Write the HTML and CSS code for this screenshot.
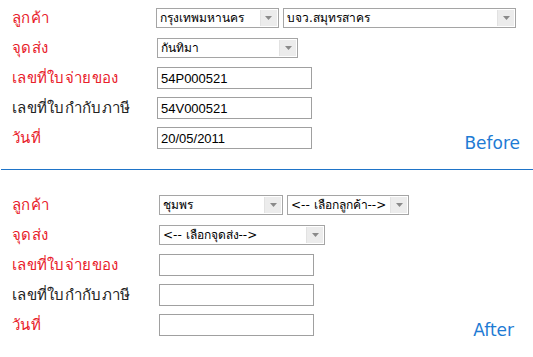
FILE: index.html
```html
<!DOCTYPE html>
<html>
<head>
<meta charset="utf-8" />
<title>ลูกค้า - Before / After</title>
<link rel="stylesheet" href="styles.css">
</head>
<body>
<div class="sheet">
	<div class="form before">
		<div class="row">
			<span class="lbl req">ลูกค้า</span>
			<div class="combo w124"><span class="txt">กรุงเทพมหานคร</span><span class="arr"><svg width="7" height="4" viewBox="0 0 7 4"><path d="M0 0h7L3.5 4z" fill="#8a8a8a"/></svg></span></div>
			<div class="combo w235"><span class="txt">บจว.สมุทรสาคร</span><span class="arr"><svg width="7" height="4" viewBox="0 0 7 4"><path d="M0 0h7L3.5 4z" fill="#8a8a8a"/></svg></span></div>
		</div>
		<div class="row">
			<span class="lbl req">จุดส่ง</span>
			<div class="combo w141"><span class="txt">กันทิมา</span><span class="arr"><svg width="7" height="4" viewBox="0 0 7 4"><path d="M0 0h7L3.5 4z" fill="#8a8a8a"/></svg></span></div>
		</div>
		<div class="row">
			<span class="lbl req">เลขที่ใบจ่ายของ</span>
			<input class="box" type="text" value="54P000521" />
		</div>
		<div class="row">
			<span class="lbl">เลขที่ใบกำกับภาษี</span>
			<input class="box" type="text" value="54V000521" />
		</div>
		<div class="row">
			<span class="lbl req">วันที่</span>
			<input class="box" type="text" value="20/05/2011" />
			<span class="tag">Before</span>
		</div>
	</div>

	<div class="form after">
		<div class="row">
			<span class="lbl req">ลูกค้า</span>
			<div class="combo w124"><span class="txt">ชุมพร</span><span class="arr"><svg width="7" height="4" viewBox="0 0 7 4"><path d="M0 0h7L3.5 4z" fill="#8a8a8a"/></svg></span></div>
			<div class="combo w122"><span class="txt">&lt;-- เลือกลูกค้า--&gt;</span><span class="arr"><svg width="7" height="4" viewBox="0 0 7 4"><path d="M0 0h7L3.5 4z" fill="#8a8a8a"/></svg></span></div>
		</div>
		<div class="row">
			<span class="lbl req">จุดส่ง</span>
			<div class="combo w166"><span class="txt">&lt;-- เลือกจุดส่ง--&gt;</span><span class="arr"><svg width="7" height="4" viewBox="0 0 7 4"><path d="M0 0h7L3.5 4z" fill="#8a8a8a"/></svg></span></div>
		</div>
		<div class="row">
			<span class="lbl req">เลขที่ใบจ่ายของ</span>
			<input class="box" type="text" value="" />
		</div>
		<div class="row">
			<span class="lbl">เลขที่ใบกำกับภาษี</span>
			<input class="box" type="text" value="" />
		</div>
		<div class="row">
			<span class="lbl req">วันที่</span>
			<input class="box" type="text" value="" />
			<span class="tag">After</span>
		</div>
	</div>
</div>
</body>
</html>
```

FILE: styles.css
```css
*{ margin:0; padding:0; box-sizing:border-box;}
body{ background:#fff; font-family:Tahoma, "DejaVu Sans", "Noto Sans", sans-serif;}
.sheet{ width:533px; padding-top:3px;}

.form{ padding:0 13px 0 12px;}
.row{ display:flex; align-items:center; height:30px;}
.lbl{ width:145px; font-size:15px; letter-spacing:0.3px; color:#222;}
.lbl.req{ color:#e8202a;}

.combo{ display:flex; height:20px; border:1px solid #a5a5a5; background:#fff; margin-right:4px;}
.combo .txt{ flex:1; font-size:12px; line-height:18px; padding-left:3px; color:#000; white-space:nowrap; overflow:hidden;}
.combo .arr{ width:17px; margin:1px; display:flex; align-items:center; justify-content:center; background:#ececec; border-left:1px solid #e2e2e2;}
.w124{ width:124px;}
.w235{ width:235px;}
.w141{ width:141px;}
.w122{ width:122px;}
.w166{ width:166px;}

.box{ width:155px; height:22px; border:1px solid #a0a0a0; padding:0 3px; font:13px "Liberation Sans", Arial, sans-serif; color:#000;}

.tag{ margin-left:auto; align-self:flex-end; font-size:17px; color:#1e7bd4;}

/* lower form sits under a blue rule, shifted a little */
.form.after{ margin:16px 0 0 1px; padding:20px 19px 0 11px; border-top:1px solid #1f74c8;}
.after .lbl{ width:147px;}
```
